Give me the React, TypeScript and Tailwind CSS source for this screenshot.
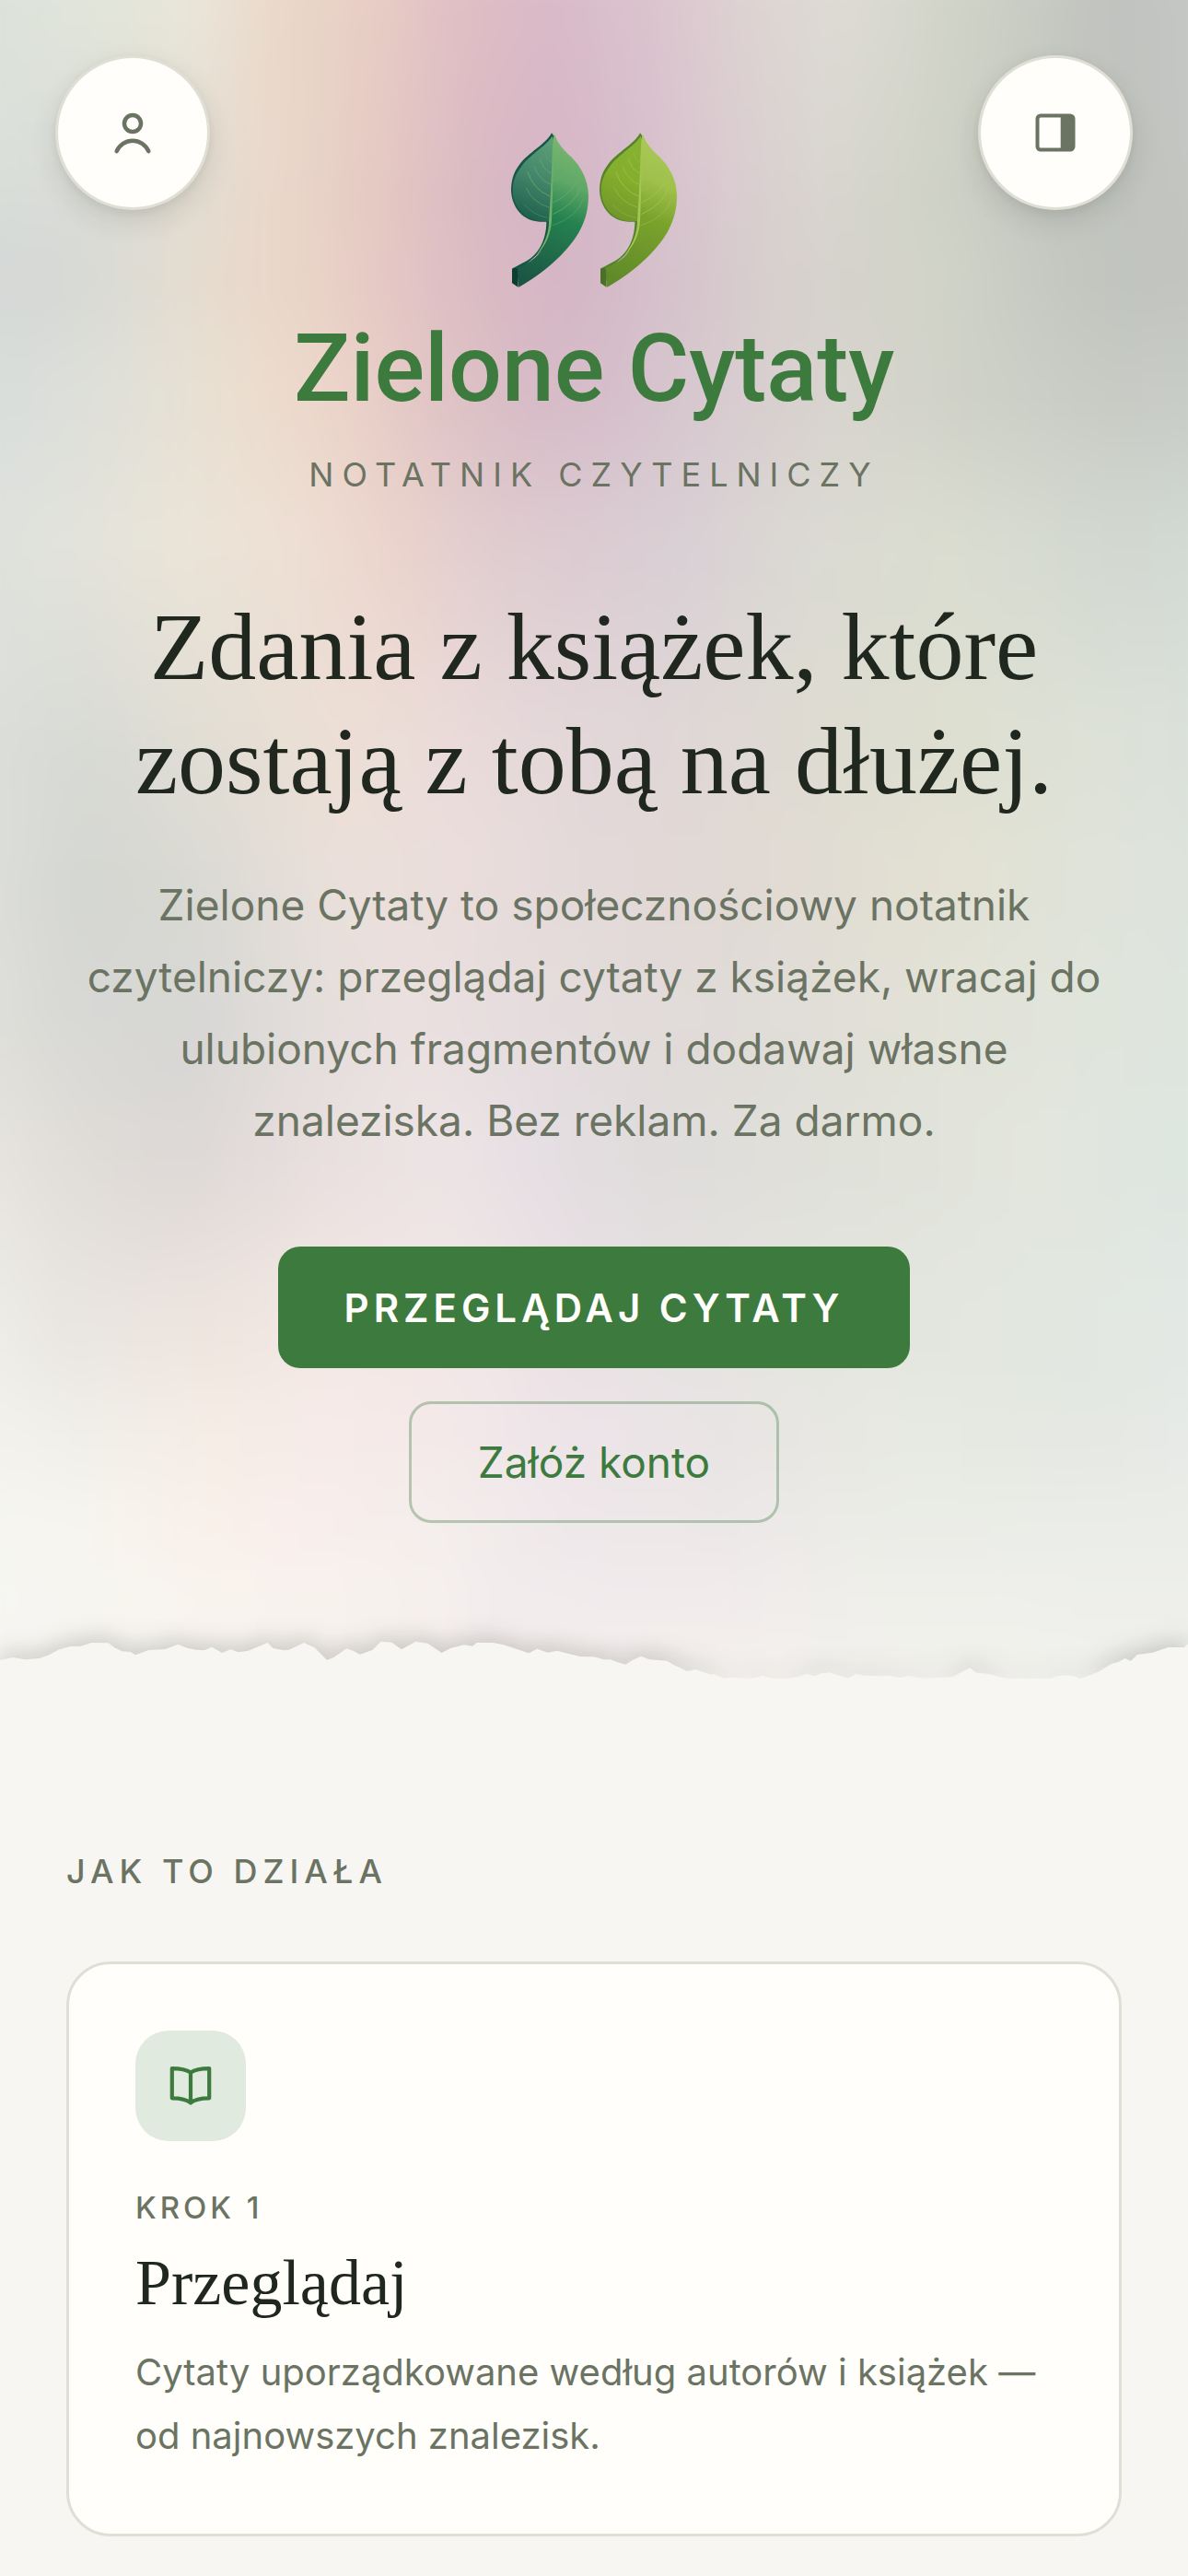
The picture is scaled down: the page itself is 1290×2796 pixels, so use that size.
import type { ReactNode } from "react";

type Band = { y: number; stops: string };

// Horizontal colour bands of the hero backdrop, each one fades into the next.
const BANDS: Band[] = [
  { y: 0, stops: "#dbe2dc 0%, #e3e6da 12%, #ebe6da 19%, #ead9ca 25%, #e8cdc5 33%, #e0bec5 40%, #d9bac9 47%, #dcc5cf 55%, #ded5d3 63%, #dedcd5 70%, #ced2c6 80%, #bfc2be 91%, #c7cac7 100%" },
  { y: 200, stops: "#d9dfdb 0%, #dadcd7 10%, #e2ddd2 18%, #ead8cb 25%, #e5c9c2 33%, #d9b9c3 41%, #d6b5c5 47%, #d6bdcb 53%, #dacbd0 60%, #d9d6d0 68%, #cfd2c6 77%, #c4c7c0 85%, #c0c3be 93%, #c6c8c5 100%" },
  { y: 300, stops: "#d6dad8 0%, #d4d7d5 6%, #dadbd5 12%, #e6dccf 19%, #ead5c8 27%, #e6c9c4 33%, #dabbc4 41%, #d5b5c5 48%, #d5c1cb 55%, #d8d1ce 65%, #d1d4c8 77%, #c3c7c0 87%, #c0c3be 95%, #c5c7c4 100%" },
  { y: 430, stops: "#dadfdc 0%, #dadedb 6%, #e3e1d7 15%, #ebdfd0 22%, #ecd4c9 30%, #e1c5c5 37%, #d7bac6 45%, #d5bfcb 52%, #d8cbd0 60%, #d8d5ce 70%, #ced1c7 80%, #c8cbc4 90%, #c8ccc9 100%" },
  { y: 600, stops: "#dde1dd 0%, #e2e3dc 8%, #ebe4d8 18%, #eee0d5 26%, #ebd3cc 35%, #e0cdd0 42%, #dcccd2 49%, #d9d0d5 57%, #dbdad3 67%, #dbddd1 78%, #d3d9d1 90%, #d3dad5 100%" },
  { y: 800, stops: "#dcdfdb 0%, #d8dad5 10%, #e2ded4 20%, #ecdfd5 29%, #ebdcd8 37%, #e5d8da 45%, #e0d6d7 55%, #dedad2 65%, #dddfd0 78%, #dde1d7 90%, #dae1dc 100%" },
  { y: 950, stops: "#e0e1dc 0%, #d4d6d1 10%, #dbdad4 20%, #ebe0da 30%, #eadddc 40%, #e3d9d9 50%, #e1d9d4 60%, #e1ddd3 70%, #e3e1d3 78%, #dfe3da 90%, #dde3de 100%" },
  { y: 1100, stops: "#e2e1dd 0%, #d8d9d5 8%, #d6d6d4 18%, #e3dedb 28%, #ebe0e0 36%, #e5dcdd 45%, #e0dbd8 60%, #e2e1d7 75%, #e0e5dc 90%, #dde5df 100%" },
  { y: 1250, stops: "#e9e7e1 0%, #dfdbd7 11%, #dcd8d6 18%, #e9dfdf 29%, #ede4e5 38%, #e5dee3 46%, #dfdcdb 55%, #e0e1d9 70%, #e3e6dd 84%, #dee6e0 95%, #dee6e0 100%" },
  { y: 1450, stops: "#f1f0ea 0%, #e9e6e1 9%, #efe5df 19%, #f3e8e3 28%, #f2e7e7 40%, #ebe1e5 48%, #e6e2e2 56%, #e4e6df 70%, #e2e7e0 86%, #e4e9e6 100%" },
  { y: 1560, stops: "#f3f3ee 0%, #f1efe9 10%, #f5ede6 20%, #f6ebe8 29%, #f4e9e9 38%, #ede4e9 48%, #e9e4e4 60%, #e7eae2 75%, #e5e8e3 90%, #e8ebe8 100%" },
  { y: 1660, stops: "#f6f6f1 0%, #f7f5ef 10%, #f9f0ea 20%, #f9eeeb 26%, #f4eeec 38%, #efe8ea 48%, #ede8e8 60%, #ebece7 72%, #ebede8 90%, #ebedea 100%" },
  { y: 1740, stops: "#f6f6f3 0%, #f7f5f0 10%, #f9f4ee 20%, #f7f2ed 34%, #f3ecee 42%, #f2ebec 58%, #eff0eb 75%, #eeefeb 100%" },
  { y: 1825, stops: "#f7f6f1 0%, #f5eeec 40%, #f4f1ed 60%, #f0f1ed 100%" },
];

const TORN_EDGE =
  "0,189 33,180 67,187 103,183 128,172 155,154 184,144 212,143 240,132 284,133 302,149 320,160 342,162 355,172 390,156 433,153 466,137 490,149 513,155 535,157 555,146 582,165 604,154 624,163 650,158 701,132 715,150 744,157 757,155 796,132 824,148 856,188 874,180 908,151 925,158 943,170 975,156 998,128 1026,131 1052,154 1089,128 1120,134 1157,165 1180,150 1215,139 1238,143 1248,132 1292,132 1320,139 1352,152 1385,166 1407,152 1435,164 1459,158 1520,177 1556,178 1582,187 1600,187 1616,195 1639,203 1656,189 1679,176 1702,187 1747,191 1766,205 1784,215 1799,225 1822,219 1859,235 1871,235 1896,248 1919,245 1954,248 1976,247 1999,240 2024,248 2061,248 2089,244 2111,234 2134,241 2152,231 2172,229 2222,248 2242,234 2264,239 2314,241 2332,239 2358,246 2380,240 2419,248 2494,244 2541,214 2558,230 2588,233 2634,248 2754,248 2769,241 2794,238 2814,241 2830,249 2877,227 2912,200 2929,195 2947,183 2962,192 2979,171 3020,164 3060,147 3102,147 3112,136 3112,256 0,256";

function Backdrop() {
  return (
    <div aria-hidden="true" className="absolute inset-0 -z-10 overflow-hidden">
      <div className="absolute -inset-x-12 inset-y-0 blur-[20px]">
        {BANDS.map((band, i) => {
          const from = i === 0 ? 0 : BANDS[i - 1].y;
          return (
            <div
              key={band.y}
              className="absolute inset-x-0 -bottom-12"
              style={{
                // the first band bleeds over the top so the blur leaves no pale edge
                top: i === 0 ? -64 : from,
                background: `linear-gradient(to right, ${band.stops})`,
                maskImage: i === 0 ? undefined : `linear-gradient(to bottom, transparent, black ${band.y - from}px)`,
              }}
            />
          );
        })}
      </div>
    </div>
  );
}

type LeafColors = {
  id: string;
  back: string;
  left: [string, string, string];
  right: [string, string, string, string];
  cap: string;
  vein: string;
};

const DARK_LEAF: LeafColors = {
  id: "dark",
  back: "#175643",
  left: ["#5c9f78", "#43856a", "#1d5f4c"],
  right: ["#7cb86f", "#5fa868", "#258250", "#1b5644"],
  cap: "#0c3f31",
  vein: "#6fb068",
};

const LIGHT_LEAF: LeafColors = {
  id: "light",
  back: "#55832a",
  left: ["#86b233", "#84ae2c", "#71962a"],
  right: ["#abc95c", "#9fc04a", "#7aa32c", "#5f8a28"],
  cap: "#4a7029",
  vein: "#a6c653",
};

function Leaf({ colors }: { colors: LeafColors }) {
  const { id, back, left, right, cap, vein } = colors;
  return (
    <g>
      <defs>
        <linearGradient id={`${id}-left`} x1="0.7" y1="0" x2="0.5" y2="1">
          <stop offset="0" stopColor={left[0]} />
          <stop offset="0.5" stopColor={left[1]} />
          <stop offset="1" stopColor={left[2]} />
        </linearGradient>
        <linearGradient id={`${id}-right`} x1="0.6" y1="0" x2="0.4" y2="1">
          <stop offset="0" stopColor={right[0]} />
          <stop offset="0.28" stopColor={right[1]} />
          <stop offset="0.52" stopColor={right[2]} />
          <stop offset="1" stopColor={right[3]} />
        </linearGradient>
      </defs>
      <path
        fill={back}
        d="M177 43C160 78 100 108 73 145C52 172 45 200 45 232C48 290 88 331 138 332L160 332C160 380 142 430 100 457C80 469 60 478 48 486L60 500L175 400L190 60Z"
      />
      <path
        fill={`url(#${id}-left)`}
        d="M179 52C165 82 108 112 80 150C58 178 50 202 50 232C52 286 92 328 140 330L168 330L176 250L182 70Z"
      />
      <path
        fill={`url(#${id}-right)`}
        d="M186 47C196 76 214 96 240 120C272 152 296 194 297 246C297 290 288 326 268 362C230 432 150 500 70 545L62 484C110 464 168 430 171 345C176 280 178 170 181 62Z"
      />
      <path fill={cap} d="M48 486L52 482L63 483L66 488L68 545L48 532Z" />
      <path fill={vein} d="M180 78L183 78C182 160 181 240 177 330C174 378 152 420 126 442C148 412 168 378 168 330C174 250 178 160 180 78Z" />
      <g fill="none" stroke={vein} strokeWidth="3" strokeLinecap="round" opacity="0.75">
        <path d="M176 138Q162 130 156 110" opacity="0.5" />
        <path d="M175 174Q148 162 139 126" opacity="0.8" />
        <path d="M174 211Q136 196 121 153" opacity="0.8" />
        <path d="M171 249Q116 226 99 170" />
        <path d="M168 285Q116 270 94 222" opacity="0.7" />
        <path d="M162 319Q116 310 88 276" opacity="0.5" />
        <path d="M183 167Q200 156 207 130" opacity="0.8" />
        <path d="M182 199Q212 188 226 156" opacity="0.6" />
        <path d="M182 232Q224 214 240 184" opacity="0.5" />
        <path d="M182 270Q244 240 261 194" opacity="0.9" />
        <path d="M183 307Q254 274 270 222" />
        <path d="M180 344Q262 318 281 254" opacity="0.6" />
      </g>
    </g>
  );
}

function Logo() {
  return (
    <svg viewBox="45 42 540 504" className="h-[168px] w-[180px]" aria-hidden="true">
      <Leaf colors={DARK_LEAF} />
      <g transform="translate(288 0)">
        <Leaf colors={LIGHT_LEAF} />
      </g>
    </svg>
  );
}

function RoundButton({ label, children }: { label: string; children: ReactNode }) {
  return (
    <button
      type="button"
      aria-label={label}
      className="flex size-[168px] items-center justify-center rounded-full border-3 border-[#dfdfd5] bg-[#fffefb] text-[#6b7363] shadow-[0_12px_30px_rgba(32,39,31,0.12),0_3px_8px_rgba(32,39,31,0.06)]"
    >
      {children}
    </button>
  );
}

function UserIcon() {
  return (
    <svg viewBox="0 0 54 54" className="size-[54px]" fill="none" stroke="currentColor" strokeWidth="4.5" strokeLinecap="round">
      <circle cx="27" cy="17" r="9" />
      <path d="M9.7 47.2A18.8 18.8 0 0 1 44.3 47.2" />
    </svg>
  );
}

function PanelIcon() {
  return (
    <svg viewBox="0 0 54 54" className="size-[54px]">
      <rect x="7.5" y="8.5" width="39" height="37" rx="3.5" fill="none" stroke="currentColor" strokeWidth="4" />
      <path d="M32.7 8H46V46H32.7Z" fill="currentColor" />
    </svg>
  );
}

function BookIcon() {
  return (
    <svg viewBox="0 0 54 54" className="size-[54px]" fill="none" stroke="currentColor" strokeWidth="4.2" strokeLinecap="round" strokeLinejoin="round">
      <path d="M27 12.5C22 9 15 8.1 6.8 8.1V40.3C15 40.3 22 41 27 45.5C32 41 39 40.3 47.2 40.3V8.1C39 8.1 32 9 27 12.5ZM27 12.5V45.5" />
    </svg>
  );
}

export default function App() {
  return (
    <div className="min-h-screen bg-[#f7f6f2] font-['Inter','Liberation_Sans',sans-serif] text-[#20271f]">
      <section className="relative isolate">
        <Backdrop />
        <header className="absolute inset-x-0 top-0 flex justify-between p-[60px]">
          <RoundButton label="Konto">
            <UserIcon />
          </RoundButton>
          <RoundButton label="Panel boczny">
            <PanelIcon />
          </RoundButton>
        </header>

        <div className="flex flex-col items-center px-[72px] pt-36 pb-[126px] text-center">
          <Logo />
          <p className="mt-7 font-['Roboto',sans-serif] text-[102px] leading-[120px] font-medium text-[#3d7a3e]">
            Zielone Cytaty
          </p>
          <p className="mt-7 text-[36px] leading-[54px] tracking-[9px] text-[#6b7363] uppercase">
            Notatnik czytelniczy
          </p>
          <h1 className="mt-[98px] font-['Liberation_Serif',serif] text-[104px] leading-[124px]">
            Zdania z książek, które zostają z tobą na dłużej.
          </h1>
          <p className="mt-[55px] text-[46px] leading-[78px] text-[#6b7363]">
            Zielone Cytaty to społecznościowy notatnik czytelniczy: przeglądaj cytaty z książek, wracaj do
            ulubionych fragmentów i dodawaj własne znaleziska. Bez reklam. Za darmo.
          </p>
          <div className="mt-[98px] flex flex-col items-center gap-9">
            <a
              href="#cytaty"
              className="flex h-[132px] items-center rounded-3xl bg-[#3d7a3e] px-[72px] text-[42px] font-semibold tracking-[5px] text-[#fffefb] uppercase"
            >
              Przeglądaj cytaty
            </a>
            <a
              href="#konto"
              className="flex h-[132px] items-center rounded-3xl border-3 border-[#3d7a3e]/35 px-[72px] text-[46px] text-[#3d7a3e]"
            >
              Załóż konto
            </a>
          </div>
        </div>

        <svg
          viewBox="0 120 3112 135"
          preserveAspectRatio="none"
          aria-hidden="true"
          className="block h-[45px] w-full overflow-visible text-[#f7f6f2] drop-shadow-[0_-6px_12px_rgba(32,39,31,0.2)]"
        >
          <polygon points={TORN_EDGE} fill="currentColor" />
        </svg>
      </section>

      <section className="relative bg-[#f7f6f2] px-[72px] pt-[180px] pb-[42px]">
        <h2 className="text-[36px] leading-[54px] font-medium tracking-[6px] text-[#6b7363] uppercase">
          Jak to działa
        </h2>
        <article className="mt-[71px] rounded-[48px] border-3 border-[#dfdfd5] bg-[#fffefb] p-[72px]">
          <div className="flex size-[120px] items-center justify-center rounded-[36px] bg-[#e1eadf] text-[#3d7a3e]">
            <BookIcon />
          </div>
          <p className="mt-12 text-[33px] leading-[48px] font-medium tracking-[4px] text-[#6b7363] uppercase">Krok 1</p>
          <h3 className="mt-4 font-['Liberation_Serif',serif] text-[70px] leading-[84px]">Przeglądaj</h3>
          <p className="mt-5 text-[40px] leading-[69px] text-[#6b7363]">
            Cytaty uporządkowane według autorów i książek — od najnowszych znalezisk.
          </p>
        </article>
      </section>
    </div>
  );
}
